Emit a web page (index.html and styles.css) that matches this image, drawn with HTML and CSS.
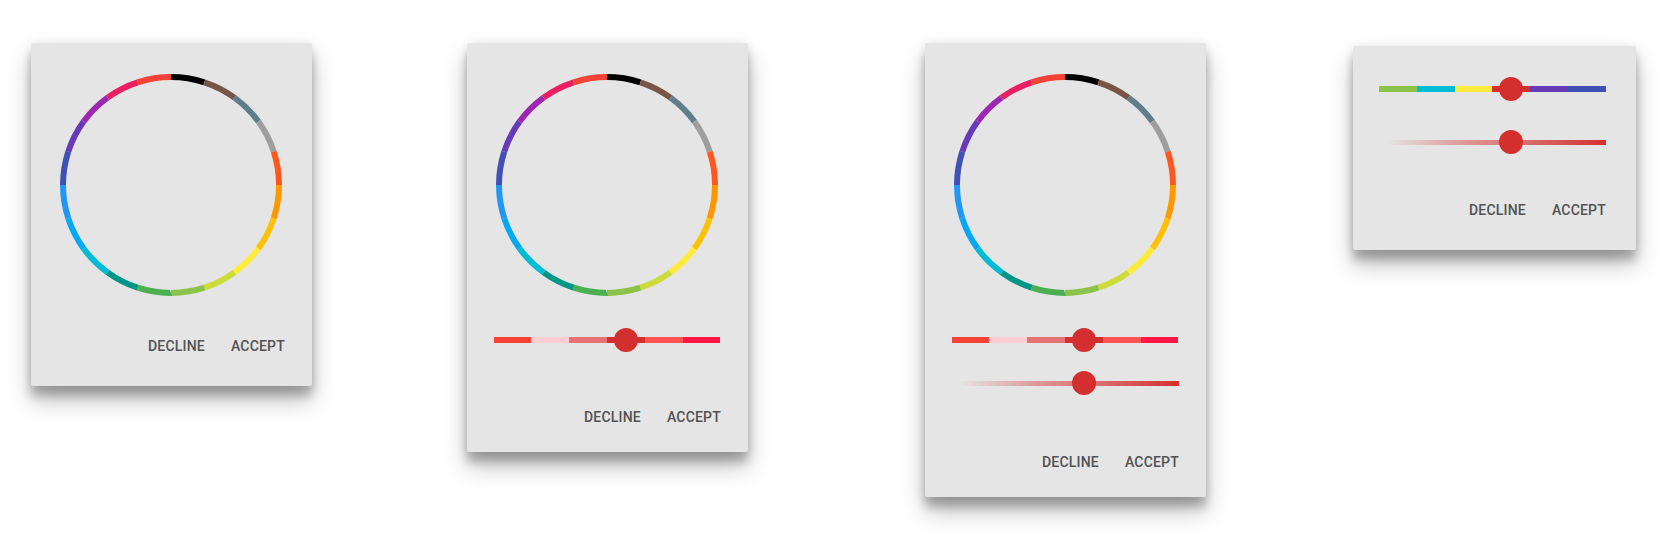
FILE: index.html
```html
<!DOCTYPE html>
<html>
<head>
<meta charset="utf-8">
<link rel="stylesheet" href="styles.css">
</head>
<body>
<div class="stage">

  <div class="card card-a">
    <svg class="ring" viewBox="0 0 222 222" width="222" height="222">
      <g transform="rotate(-90 111 111)" fill="none" stroke-width="6">
        <circle cx="111" cy="111" r="108" pathLength="20" stroke-dasharray="1 19" stroke-dashoffset="0" stroke="#000000"/>
        <circle cx="111" cy="111" r="108" pathLength="20" stroke-dasharray="1 19" stroke-dashoffset="-1" stroke="#795548"/>
        <circle cx="111" cy="111" r="108" pathLength="20" stroke-dasharray="1 19" stroke-dashoffset="-2" stroke="#607d8b"/>
        <circle cx="111" cy="111" r="108" pathLength="20" stroke-dasharray="1 19" stroke-dashoffset="-3" stroke="#9e9e9e"/>
        <circle cx="111" cy="111" r="108" pathLength="20" stroke-dasharray="1 19" stroke-dashoffset="-4" stroke="#ff5722"/>
        <circle cx="111" cy="111" r="108" pathLength="20" stroke-dasharray="1 19" stroke-dashoffset="-5" stroke="#ff9800"/>
        <circle cx="111" cy="111" r="108" pathLength="20" stroke-dasharray="1 19" stroke-dashoffset="-6" stroke="#ffc107"/>
        <circle cx="111" cy="111" r="108" pathLength="20" stroke-dasharray="1 19" stroke-dashoffset="-7" stroke="#ffeb3b"/>
        <circle cx="111" cy="111" r="108" pathLength="20" stroke-dasharray="1 19" stroke-dashoffset="-8" stroke="#cddc39"/>
        <circle cx="111" cy="111" r="108" pathLength="20" stroke-dasharray="1 19" stroke-dashoffset="-9" stroke="#8bc34a"/>
        <circle cx="111" cy="111" r="108" pathLength="20" stroke-dasharray="1 19" stroke-dashoffset="-10" stroke="#4caf50"/>
        <circle cx="111" cy="111" r="108" pathLength="20" stroke-dasharray="1 19" stroke-dashoffset="-11" stroke="#009688"/>
        <circle cx="111" cy="111" r="108" pathLength="20" stroke-dasharray="1 19" stroke-dashoffset="-12" stroke="#00bcd4"/>
        <circle cx="111" cy="111" r="108" pathLength="20" stroke-dasharray="1 19" stroke-dashoffset="-13" stroke="#03a9f4"/>
        <circle cx="111" cy="111" r="108" pathLength="20" stroke-dasharray="1 19" stroke-dashoffset="-14" stroke="#2196f3"/>
        <circle cx="111" cy="111" r="108" pathLength="20" stroke-dasharray="1 19" stroke-dashoffset="-15" stroke="#3f51b5"/>
        <circle cx="111" cy="111" r="108" pathLength="20" stroke-dasharray="1 19" stroke-dashoffset="-16" stroke="#673ab7"/>
        <circle cx="111" cy="111" r="108" pathLength="20" stroke-dasharray="1 19" stroke-dashoffset="-17" stroke="#9c27b0"/>
        <circle cx="111" cy="111" r="108" pathLength="20" stroke-dasharray="1 19" stroke-dashoffset="-18" stroke="#e91e63"/>
        <circle cx="111" cy="111" r="108" pathLength="20" stroke-dasharray="1 19" stroke-dashoffset="-19" stroke="#f44336"/>
      </g>
    </svg>
    <div class="actions">
      <span class="btn">DECLINE</span>
      <span class="btn">ACCEPT</span>
    </div>
  </div>

  <div class="card card-b">
    <svg class="ring" viewBox="0 0 222 222" width="222" height="222">
      <g transform="rotate(-90 111 111)" fill="none" stroke-width="6">
        <circle cx="111" cy="111" r="108" pathLength="20" stroke-dasharray="1 19" stroke-dashoffset="0" stroke="#000000"/>
        <circle cx="111" cy="111" r="108" pathLength="20" stroke-dasharray="1 19" stroke-dashoffset="-1" stroke="#795548"/>
        <circle cx="111" cy="111" r="108" pathLength="20" stroke-dasharray="1 19" stroke-dashoffset="-2" stroke="#607d8b"/>
        <circle cx="111" cy="111" r="108" pathLength="20" stroke-dasharray="1 19" stroke-dashoffset="-3" stroke="#9e9e9e"/>
        <circle cx="111" cy="111" r="108" pathLength="20" stroke-dasharray="1 19" stroke-dashoffset="-4" stroke="#ff5722"/>
        <circle cx="111" cy="111" r="108" pathLength="20" stroke-dasharray="1 19" stroke-dashoffset="-5" stroke="#ff9800"/>
        <circle cx="111" cy="111" r="108" pathLength="20" stroke-dasharray="1 19" stroke-dashoffset="-6" stroke="#ffc107"/>
        <circle cx="111" cy="111" r="108" pathLength="20" stroke-dasharray="1 19" stroke-dashoffset="-7" stroke="#ffeb3b"/>
        <circle cx="111" cy="111" r="108" pathLength="20" stroke-dasharray="1 19" stroke-dashoffset="-8" stroke="#cddc39"/>
        <circle cx="111" cy="111" r="108" pathLength="20" stroke-dasharray="1 19" stroke-dashoffset="-9" stroke="#8bc34a"/>
        <circle cx="111" cy="111" r="108" pathLength="20" stroke-dasharray="1 19" stroke-dashoffset="-10" stroke="#4caf50"/>
        <circle cx="111" cy="111" r="108" pathLength="20" stroke-dasharray="1 19" stroke-dashoffset="-11" stroke="#009688"/>
        <circle cx="111" cy="111" r="108" pathLength="20" stroke-dasharray="1 19" stroke-dashoffset="-12" stroke="#00bcd4"/>
        <circle cx="111" cy="111" r="108" pathLength="20" stroke-dasharray="1 19" stroke-dashoffset="-13" stroke="#03a9f4"/>
        <circle cx="111" cy="111" r="108" pathLength="20" stroke-dasharray="1 19" stroke-dashoffset="-14" stroke="#2196f3"/>
        <circle cx="111" cy="111" r="108" pathLength="20" stroke-dasharray="1 19" stroke-dashoffset="-15" stroke="#3f51b5"/>
        <circle cx="111" cy="111" r="108" pathLength="20" stroke-dasharray="1 19" stroke-dashoffset="-16" stroke="#673ab7"/>
        <circle cx="111" cy="111" r="108" pathLength="20" stroke-dasharray="1 19" stroke-dashoffset="-17" stroke="#9c27b0"/>
        <circle cx="111" cy="111" r="108" pathLength="20" stroke-dasharray="1 19" stroke-dashoffset="-18" stroke="#e91e63"/>
        <circle cx="111" cy="111" r="108" pathLength="20" stroke-dasharray="1 19" stroke-dashoffset="-19" stroke="#f44336"/>
      </g>
    </svg>
    <div class="slider slider-first">
      <div class="track track-seg">
        <i class="seg c-red"></i><i class="seg c-red100"></i><i class="seg c-red300"></i><i class="seg c-red700"></i><i class="seg c-redA200"></i><i class="seg c-redA400"></i>
      </div>
      <span class="thumb"></span>
    </div>
    <div class="actions">
      <span class="btn">DECLINE</span>
      <span class="btn">ACCEPT</span>
    </div>
  </div>

  <div class="card card-c">
    <svg class="ring" viewBox="0 0 222 222" width="222" height="222">
      <g transform="rotate(-90 111 111)" fill="none" stroke-width="6">
        <circle cx="111" cy="111" r="108" pathLength="20" stroke-dasharray="1 19" stroke-dashoffset="0" stroke="#000000"/>
        <circle cx="111" cy="111" r="108" pathLength="20" stroke-dasharray="1 19" stroke-dashoffset="-1" stroke="#795548"/>
        <circle cx="111" cy="111" r="108" pathLength="20" stroke-dasharray="1 19" stroke-dashoffset="-2" stroke="#607d8b"/>
        <circle cx="111" cy="111" r="108" pathLength="20" stroke-dasharray="1 19" stroke-dashoffset="-3" stroke="#9e9e9e"/>
        <circle cx="111" cy="111" r="108" pathLength="20" stroke-dasharray="1 19" stroke-dashoffset="-4" stroke="#ff5722"/>
        <circle cx="111" cy="111" r="108" pathLength="20" stroke-dasharray="1 19" stroke-dashoffset="-5" stroke="#ff9800"/>
        <circle cx="111" cy="111" r="108" pathLength="20" stroke-dasharray="1 19" stroke-dashoffset="-6" stroke="#ffc107"/>
        <circle cx="111" cy="111" r="108" pathLength="20" stroke-dasharray="1 19" stroke-dashoffset="-7" stroke="#ffeb3b"/>
        <circle cx="111" cy="111" r="108" pathLength="20" stroke-dasharray="1 19" stroke-dashoffset="-8" stroke="#cddc39"/>
        <circle cx="111" cy="111" r="108" pathLength="20" stroke-dasharray="1 19" stroke-dashoffset="-9" stroke="#8bc34a"/>
        <circle cx="111" cy="111" r="108" pathLength="20" stroke-dasharray="1 19" stroke-dashoffset="-10" stroke="#4caf50"/>
        <circle cx="111" cy="111" r="108" pathLength="20" stroke-dasharray="1 19" stroke-dashoffset="-11" stroke="#009688"/>
        <circle cx="111" cy="111" r="108" pathLength="20" stroke-dasharray="1 19" stroke-dashoffset="-12" stroke="#00bcd4"/>
        <circle cx="111" cy="111" r="108" pathLength="20" stroke-dasharray="1 19" stroke-dashoffset="-13" stroke="#03a9f4"/>
        <circle cx="111" cy="111" r="108" pathLength="20" stroke-dasharray="1 19" stroke-dashoffset="-14" stroke="#2196f3"/>
        <circle cx="111" cy="111" r="108" pathLength="20" stroke-dasharray="1 19" stroke-dashoffset="-15" stroke="#3f51b5"/>
        <circle cx="111" cy="111" r="108" pathLength="20" stroke-dasharray="1 19" stroke-dashoffset="-16" stroke="#673ab7"/>
        <circle cx="111" cy="111" r="108" pathLength="20" stroke-dasharray="1 19" stroke-dashoffset="-17" stroke="#9c27b0"/>
        <circle cx="111" cy="111" r="108" pathLength="20" stroke-dasharray="1 19" stroke-dashoffset="-18" stroke="#e91e63"/>
        <circle cx="111" cy="111" r="108" pathLength="20" stroke-dasharray="1 19" stroke-dashoffset="-19" stroke="#f44336"/>
      </g>
    </svg>
    <div class="slider slider-first">
      <div class="track track-seg">
        <i class="seg c-red"></i><i class="seg c-red100"></i><i class="seg c-red300"></i><i class="seg c-red700"></i><i class="seg c-redA200"></i><i class="seg c-redA400"></i>
      </div>
      <span class="thumb"></span>
    </div>
    <div class="slider slider-second">
      <div class="track track-fade"></div>
      <span class="thumb"></span>
    </div>
    <div class="actions">
      <span class="btn">DECLINE</span>
      <span class="btn">ACCEPT</span>
    </div>
  </div>

  <div class="card card-d">
    <div class="slider slider-top">
      <div class="track track-seg">
        <i class="seg c-lgreen"></i><i class="seg c-cyan"></i><i class="seg c-yellow"></i><i class="seg c-red700"></i><i class="seg c-dpurple"></i><i class="seg c-indigo"></i>
      </div>
      <span class="thumb"></span>
    </div>
    <div class="slider slider-wide">
      <div class="track track-fade"></div>
      <span class="thumb"></span>
    </div>
    <div class="actions">
      <span class="btn">DECLINE</span>
      <span class="btn">ACCEPT</span>
    </div>
  </div>

</div>
</body>
</html>
```

FILE: styles.css
```css
html, body {
  margin: 0;
  padding: 0;
  background: #ffffff;
}

body {
  font-family: Roboto, "Liberation Sans", Arial, sans-serif;
}

.stage {
  box-sizing: border-box;
  min-height: 553px;
  display: flex;
  align-items: flex-start;
  padding: 43px 0 0 31px;
}

.card {
  box-sizing: border-box;
  width: 281px;
  background: #e5e5e5;
  border-radius: 2px;
  display: flex;
  flex-direction: column;
  align-items: center;
  padding: 0 27px 32px 26px;
  box-shadow: 0 14px 24px rgba(0, 0, 0, 0.26), 0 10px 10px rgba(0, 0, 0, 0.22), 0 0 8px rgba(0, 0, 0, 0.07);
}

.card-a { height: 343px; }
.card-b { height: 409px; margin-left: 155px; padding-bottom: 27px; }
.card-c { height: 454px; margin-left: 177px; padding-bottom: 27px; }
.card-d { height: 204px; width: 283px; margin-left: 147px; margin-top: 3px; padding-right: 30px; }

.ring {
  display: block;
  margin-top: 31px;
  flex: none;
}

.slider {
  position: relative;
  width: 227px;
  height: 24px;
  flex: none;
  display: flex;
  align-items: center;
}

.slider-first { margin-top: 32px; }
.slider-second { margin-top: 19px; }
.slider-top { margin-top: 31px; }
.slider-wide { margin-top: 29px; }

.track {
  width: 100%;
  height: 6px;
  display: flex;
}

.track-fade {
  height: 5px;
  background: linear-gradient(to right, rgba(211, 47, 47, 0) 3%, rgba(211, 47, 47, 0.45) 40%, rgba(211, 47, 47, 0.7) 70%, #d32f2f 100%);
}

.seg {
  flex: 1;
  display: block;
}

.c-red { background: #f44336; }
.c-red100 { background: #ffcdd2; }
.c-red300 { background: #e57373; }
.c-red700 { background: #d32f2f; }
.c-redA200 { background: #ff5252; }
.c-redA400 { background: #ff1744; }
.c-lgreen { background: #8bc34a; }
.c-cyan { background: #00bcd4; }
.c-yellow { background: #ffeb3b; }
.c-dpurple { background: #673ab7; }
.c-indigo { background: #3f51b5; }

.thumb {
  position: absolute;
  left: 120px;
  top: 0;
  width: 24px;
  height: 24px;
  border-radius: 50%;
  background: #d32f2f;
}

.actions {
  margin-top: auto;
  align-self: stretch;
  display: flex;
  justify-content: flex-end;
  gap: 26px;
}

.btn {
  font-size: 14px;
  font-weight: 500;
  line-height: 16px;
  color: #525252;
  letter-spacing: 0.2px;
}
```
